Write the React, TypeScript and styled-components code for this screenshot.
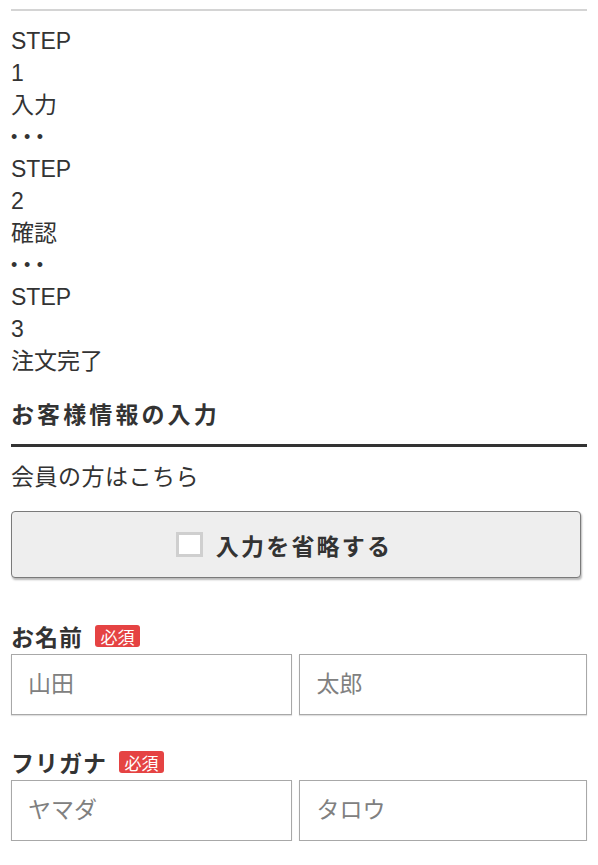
import React from "react";
import styled, { createGlobalStyle } from "styled-components";

const Global = createGlobalStyle`
  html, body { margin: 0; padding: 0; background: #fff; }
  body {
    font-family: "Liberation Sans", Arial, "Noto Sans CJK JP", sans-serif;
    color: #333;
  }
  * { box-sizing: border-box; }
`;

const Page = styled.div`
  width: 598px;
  padding: 9px 11px 0 11px;
`;

const TopRule = styled.hr`
  margin: 0;
  border: 0;
  border-top: 2px solid #d4d4d4;
`;

const Steps = styled.ol`
  list-style: none;
  margin: 14px 0 0 0;
  padding: 0;
  font-size: 23px;
  line-height: 32px;
`;

const Line = styled.div`
  display: block;
`;

const Dots = styled.div`
  font-size: 18px;
  letter-spacing: 6.6px;
  line-height: 32px;
`;

const SectionTitle = styled.h2`
  margin: 22px 0 0 0;
  padding: 0 0 13px 0;
  font-size: 23px;
  line-height: 32px;
  font-weight: bold;
  letter-spacing: 3.1px;
  border-bottom: 3px solid #333;
`;

const MemberText = styled.p`
  margin: 14px 0 0 0;
  font-size: 23px;
  line-height: 32px;
  letter-spacing: 0.5px;
`;

const SkipButton = styled.label`
  margin-top: 18px;
  width: 570px;
  height: 67px;
  display: flex;
  align-items: center;
  justify-content: center;
  gap: 13px;
  background: #eeeeee;
  border: 1px solid #7a7a7a;
  border-radius: 4px;
  box-shadow: 1px 2px 2px rgba(0, 0, 0, 0.28);
  font-size: 23px;
  font-weight: bold;
  letter-spacing: 2.2px;
  color: #333;
  padding-right: 24px;
`;

const Check = styled.span`
  display: inline-block;
  width: 27px;
  height: 25px;
  background: #fff;
  border: 3px solid #cfcfcf;
`;

const Field = styled.div<{ $first?: boolean }>`
  margin-top: ${(p) => (p.$first ? "42px" : "31px")};
`;

const Label = styled.div`
  display: flex;
  align-items: center;
  height: 32px;
  font-size: 23px;
  font-weight: bold;
  letter-spacing: 1px;
`;

const Badge = styled.span`
  margin-left: 12px;
  display: inline-flex;
  align-items: center;
  justify-content: center;
  width: 45px;
  height: 22px;
  border-radius: 3px;
  background: #e54343;
  color: #fff;
  font-size: 17px;
  font-weight: normal;
  letter-spacing: 0;
`;

const Inputs = styled.div`
  margin-top: 2px;
  display: grid;
  grid-template-columns: 281fr 287fr;
  gap: 7px;
`;

const TextInput = styled.input`
  height: 61px;
  width: 100%;
  border: 1px solid #a8a8a8;
  box-shadow: 0 1px 1px rgba(0, 0, 0, 0.12);
  padding: 0 16px;
  font-size: 23px;
  font-family: "Liberation Sans", Arial, "Noto Sans CJK JP", sans-serif;
  color: #333;
  outline: none;
  &::placeholder {
    color: #808080;
  }
`;

const steps = [
  { n: "1", label: "入力" },
  { n: "2", label: "確認" },
  { n: "3", label: "注文完了" },
];

export default function App() {
  return (
    <Page>
      <Global />
      <TopRule />
      <Steps>
        {steps.map((s, i) => (
          <li key={s.n}>
            <Line>STEP</Line>
            <Line>{s.n}</Line>
            <Line>{s.label}</Line>
            {i < steps.length - 1 && <Dots>•••</Dots>}
          </li>
        ))}
      </Steps>
      <SectionTitle>お客様情報の入力</SectionTitle>
      <MemberText>会員の方はこちら</MemberText>
      <SkipButton>
        <Check />
        入力を省略する
      </SkipButton>
      <Field $first>
        <Label>
          お名前<Badge>必須</Badge>
        </Label>
        <Inputs>
          <TextInput placeholder="山田" />
          <TextInput placeholder="太郎" />
        </Inputs>
      </Field>
      <Field>
        <Label>
          フリガナ<Badge>必須</Badge>
        </Label>
        <Inputs>
          <TextInput placeholder="ヤマダ" />
          <TextInput placeholder="タロウ" />
        </Inputs>
      </Field>
    </Page>
  );
}
